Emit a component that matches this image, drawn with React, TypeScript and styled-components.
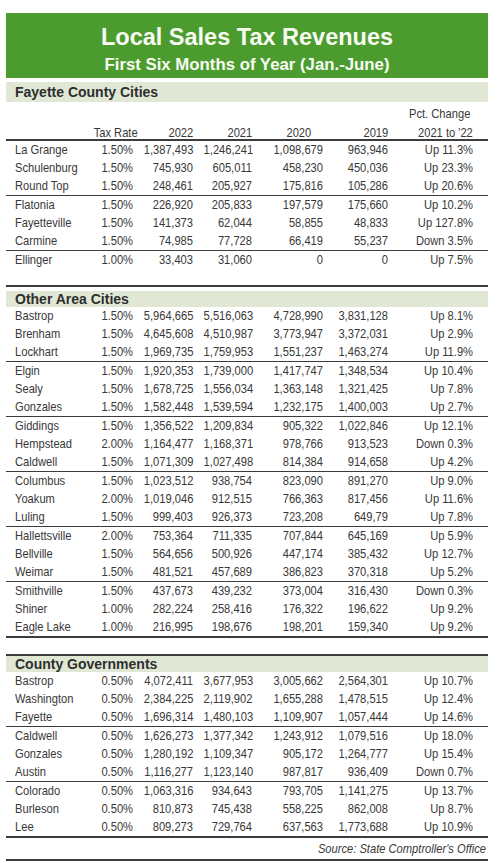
import React from "react";
import styled, { createGlobalStyle, css } from "styled-components";

const GlobalStyle = createGlobalStyle`
  html, body { margin: 0; padding: 0; background: #ffffff; }
`;

const SANS = `"Liberation Sans", Arial, Helvetica, sans-serif`;
const COLS = "78px 40px 60px 59px 71px 65px 85px";

/* Arial Narrow look: Liberation Sans drawn 82% wide */
const narrow = (origin: "left" | "right") => css`
  transform: scaleX(0.82);
  transform-origin: ${origin} center;
`;

type Row = [string, string, string, string, string, string, string];

interface SectionData {
  title: string;
  ruleTop: number | null;
  bandTop: number;
  bandHeight: number;
  showHeader: boolean;
  groups: Row[][];
  lastBorder: number;
}

const sections: SectionData[] = [
  {
    title: "Fayette County Cities",
    ruleTop: null,
    bandTop: 4,
    bandHeight: 20,
    showHeader: true,
    lastBorder: 0,
    groups: [
      [
        ["La Grange", "1.50%", "1,387,493", "1,246,241", "1,098,679", "963,946", "Up 11.3%"],
        ["Schulenburg", "1.50%", "745,930", "605,011", "458,230", "450,036", "Up 23.3%"],
        ["Round Top", "1.50%", "248,461", "205,927", "175,816", "105,286", "Up 20.6%"],
      ],
      [
        ["Flatonia", "1.50%", "226,920", "205,833", "197,579", "175,660", "Up 10.2%"],
        ["Fayetteville", "1.50%", "141,373", "62,044", "58,855", "48,833", "Up 127.8%"],
        ["Carmine", "1.50%", "74,985", "77,728", "66,419", "55,237", "Down 3.5%"],
      ],
      [["Ellinger", "1.00%", "33,403", "31,060", "0", "0", "Up 7.5%"]],
    ],
  },
  {
    title: "Other Area Cities",
    ruleTop: 16,
    bandTop: 4,
    bandHeight: 16,
    showHeader: false,
    lastBorder: 2,
    groups: [
      [
        ["Bastrop", "1.50%", "5,964,665", "5,516,063", "4,728,990", "3,831,128", "Up 8.1%"],
        ["Brenham", "1.50%", "4,645,608", "4,510,987", "3,773,947", "3,372,031", "Up 2.9%"],
        ["Lockhart", "1.50%", "1,969,735", "1,759,953", "1,551,237", "1,463,274", "Up 11.9%"],
      ],
      [
        ["Elgin", "1.50%", "1,920,353", "1,739,000", "1,417,747", "1,348,534", "Up 10.4%"],
        ["Sealy", "1.50%", "1,678,725", "1,556,034", "1,363,148", "1,321,425", "Up 7.8%"],
        ["Gonzales", "1.50%", "1,582,448", "1,539,594", "1,232,175", "1,400,003", "Up 2.7%"],
      ],
      [
        ["Giddings", "1.50%", "1,356,522", "1,209,834", "905,322", "1,022,846", "Up 12.1%"],
        ["Hempstead", "2.00%", "1,164,477", "1,168,371", "978,766", "913,523", "Down 0.3%"],
        ["Caldwell", "1.50%", "1,071,309", "1,027,498", "814,384", "914,658", "Up 4.2%"],
      ],
      [
        ["Columbus", "1.50%", "1,023,512", "938,754", "823,090", "891,270", "Up 9.0%"],
        ["Yoakum", "2.00%", "1,019,046", "912,515", "766,363", "817,456", "Up 11.6%"],
        ["Luling", "1.50%", "999,403", "926,373", "723,208", "649,79", "Up 7.8%"],
      ],
      [
        ["Hallettsville", "2.00%", "753,364", "711,335", "707,844", "645,169", "Up 5.9%"],
        ["Bellville", "1.50%", "564,656", "500,926", "447,174", "385,432", "Up 12.7%"],
        ["Weimar", "1.50%", "481,521", "457,689", "386,823", "370,318", "Up 5.2%"],
      ],
      [
        ["Smithville", "1.50%", "437,673", "439,232", "373,004", "316,430", "Down 0.3%"],
        ["Shiner", "1.00%", "282,224", "258,416", "176,322", "196,622", "Up 9.2%"],
        ["Eagle Lake", "1.00%", "216,995", "198,676", "198,201", "159,340", "Up 9.2%"],
      ],
    ],
  },
  {
    title: "County Governments",
    ruleTop: 16,
    bandTop: 0,
    bandHeight: 16,
    showHeader: false,
    lastBorder: 2,
    groups: [
      [
        ["Bastrop", "0.50%", "4,072,411", "3,677,953", "3,005,662", "2,564,301", "Up 10.7%"],
        ["Washington", "0.50%", "2,384,225", "2,119,902", "1,655,288", "1,478,515", "Up 12.4%"],
        ["Fayette", "0.50%", "1,696,314", "1,480,103", "1,109,907", "1,057,444", "Up 14.6%"],
      ],
      [
        ["Caldwell", "0.50%", "1,626,273", "1,377,342", "1,243,912", "1,079,516", "Up 18.0%"],
        ["Gonzales", "0.50%", "1,280,192", "1,109,347", "905,172", "1,264,777", "Up 15.4%"],
        ["Austin", "0.50%", "1,116,277", "1,123,140", "987,817", "936,409", "Down 0.7%"],
      ],
      [
        ["Colorado", "0.50%", "1,063,316", "934,643", "793,705", "1,141,275", "Up 13.7%"],
        ["Burleson", "0.50%", "810,873", "745,438", "558,225", "862,008", "Up 8.7%"],
        ["Lee", "0.50%", "809,273", "729,764", "637,563", "1,773,688", "Up 10.9%"],
      ],
    ],
  },
];

const Page = styled.div`
  width: 482px;
  margin-left: 6px;
  padding-top: 13px;
  font-family: ${SANS};
  color: #383838;
`;

const Banner = styled.header`
  height: 65px;
  box-sizing: border-box;
  padding-top: 11px;
  background: #4c9b2f;
  display: flex;
  flex-direction: column;
  align-items: center;
  gap: 5px;
  font-weight: bold;
  color: #f7fbf2;
`;

const Title = styled.h1`
  margin: 0;
  font-size: 23.5px;
  line-height: 26px;
  font-weight: bold;
`;

const Subtitle = styled.h2`
  margin: 0;
  font-size: 16.8px;
  line-height: 20px;
  font-weight: bold;
`;

const Band = styled.div<{ $top: number; $h: number }>`
  margin-top: ${(p) => p.$top}px;
  height: ${(p) => p.$h}px;
  line-height: ${(p) => p.$h}px;
  padding-left: 9px;
  background: #e0e8d5;
  font-weight: bold;
  font-size: 14px;
  color: #2e2e2e;
`;

const GridRow = styled.div`
  display: grid;
  grid-template-columns: ${COLS};
  padding: 0 15px 0 9px;
  font-size: 13.6px;
`;

const HeaderRow = styled(GridRow)`
  height: 39px;
  box-sizing: border-box;
  align-items: end;
  border-bottom: 2px solid #3c3c3c;
`;

const HeadCell = styled.div<{ $shift?: number }>`
  justify-self: end;
  line-height: 13px;
  margin-right: ${(p) => p.$shift ?? 0}px;
  white-space: nowrap;
  ${narrow("right")}
`;

const PctHead = styled.div`
  justify-self: end;
  display: flex;
  flex-direction: column;
  align-items: flex-end;
  gap: 6px;
  line-height: 13px;
  white-space: nowrap;
  ${narrow("right")}
`;

const PctLine = styled.span<{ $pad?: number }>`
  padding-right: ${(p) => p.$pad ?? 0}px;
`;

const Group = styled.div<{ $border: number }>`
  border-bottom: ${(p) => (p.$border ? `${p.$border}px solid #3c3c3c` : "none")};
`;

const DataRow = styled(GridRow)`
  height: 18px;
  line-height: 18px;
  align-items: center;
`;

const Cell = styled.div<{ $left?: boolean }>`
  text-align: ${(p) => (p.$left ? "left" : "right")};
  white-space: nowrap;
  ${(p) => narrow(p.$left ? "left" : "right")}
`;

const Rule = styled.div<{ $top: number }>`
  margin-top: ${(p) => p.$top}px;
  border-top: 2px solid #3c3c3c;
`;

const Source = styled.div`
  height: 21px;
  line-height: 21px;
  text-align: right;
  padding-right: 2px;
  font-size: 13.6px;
  border-bottom: 2px solid #3c3c3c;
`;

const SourceText = styled.span`
  display: inline-block;
  font-style: italic;
  ${narrow("right")}
`;

function TableHeader() {
  return (
    <HeaderRow>
      <div />
      <HeadCell $shift={-5}>Tax Rate</HeadCell>
      <HeadCell>2022</HeadCell>
      <HeadCell>2021</HeadCell>
      <HeadCell $shift={12}>2020</HeadCell>
      <HeadCell>2019</HeadCell>
      <PctHead>
        <PctLine $pad={3}>Pct. Change</PctLine>
        <PctLine>2021 to &apos;22</PctLine>
      </PctHead>
    </HeaderRow>
  );
}

function Section({ data }: { data: SectionData }) {
  return (
    <section>
      {data.ruleTop !== null && <Rule $top={data.ruleTop} />}
      <Band $top={data.bandTop} $h={data.bandHeight}>
        {data.title}
      </Band>
      {data.showHeader && <TableHeader />}
      {data.groups.map((g, gi) => (
        <Group key={gi} $border={gi === data.groups.length - 1 ? data.lastBorder : 1}>
          {g.map((r, ri) => (
            <DataRow key={ri}>
              {r.map((c, ci) => (
                <Cell key={ci} $left={ci === 0}>
                  {c}
                </Cell>
              ))}
            </DataRow>
          ))}
        </Group>
      ))}
    </section>
  );
}

export default function App() {
  return (
    <>
      <GlobalStyle />
      <Page>
        <Banner>
          <Title>Local Sales Tax Revenues</Title>
          <Subtitle>First Six Months of Year (Jan.-June)</Subtitle>
        </Banner>
        {sections.map((s) => (
          <Section key={s.title} data={s} />
        ))}
        <Source>
          <SourceText>Source: State Comptroller&apos;s Office</SourceText>
        </Source>
      </Page>
    </>
  );
}
